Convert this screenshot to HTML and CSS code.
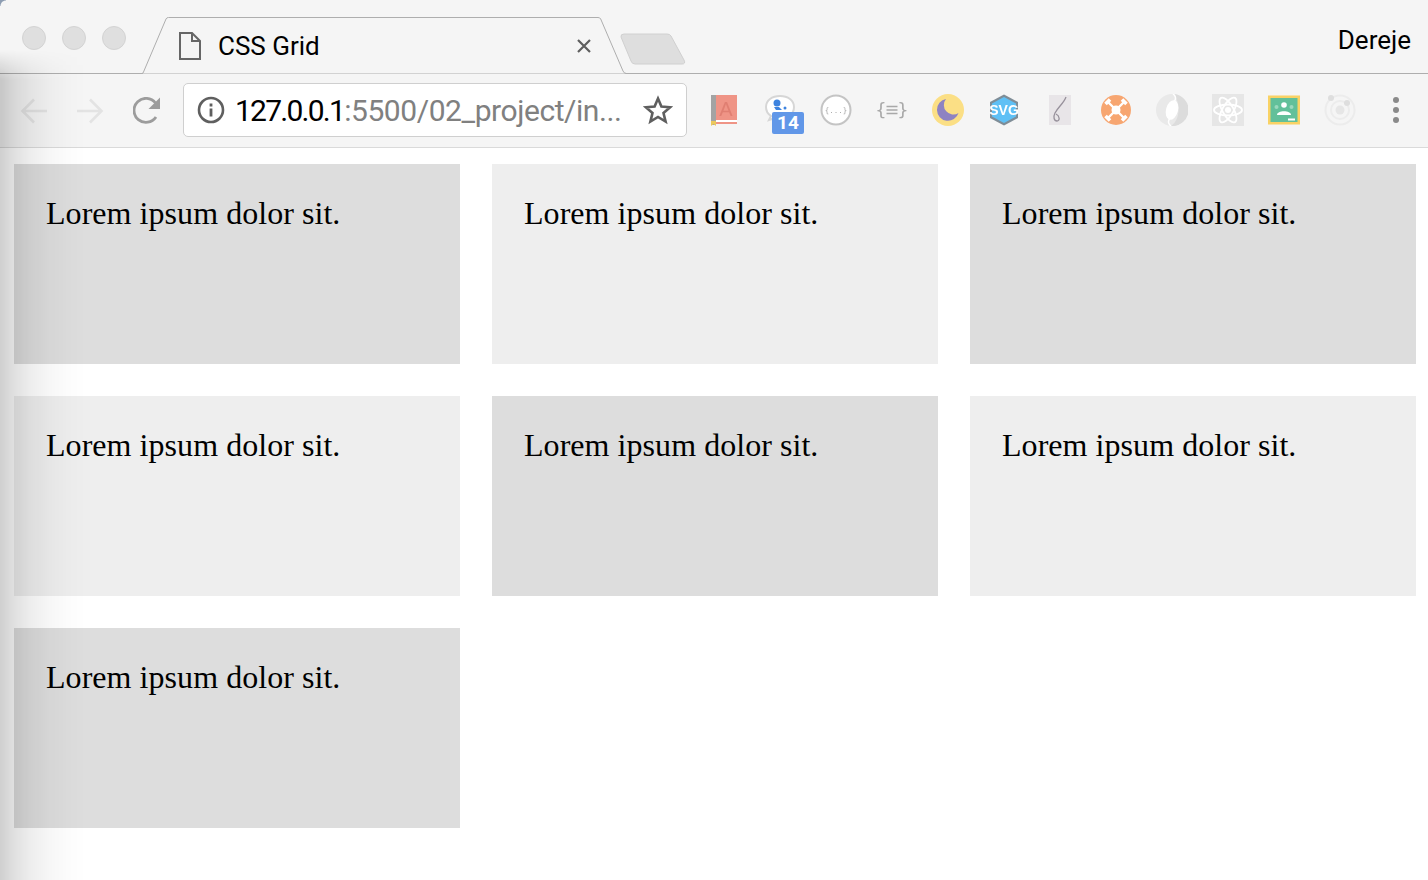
FILE: index.html
```html
<!DOCTYPE html>
<html lang="en">
<head>
    <meta charset="UTF-8">
    <meta name="viewport" content="width=device-width, initial-scale=1.0">
    <title>CSS Grid</title>
    <link rel="stylesheet" href="styles.css">
</head>
<body>
    <div class="corner"></div>
    <div class="edge-shadow"></div>

    <header class="chrome">
        <div class="tabstrip">
            <div class="lights">
                <span class="light"></span>
                <span class="light"></span>
                <span class="light"></span>
            </div>
            <div class="tab">
                <svg class="tab-shape" width="488" height="58" viewBox="0 0 488 58">
                    <path d="M0.5 56.5H1Q2 56.5 2.500 55L25 2Q25.600 0.500 27.500 0.500H457Q459 0.500 459.700 2L482 54Q483 56.500 485.500 56.500H488" fill="#f5f5f5" stroke="#aeaeae" stroke-width="1"/>
                </svg>
                <svg class="tab-file" width="22" height="28" viewBox="0 0 22 28">
                    <path d="M1 1H13L21 9V27H1Z M13 1V9H21" fill="none" stroke="#666" stroke-width="2"/>
                </svg>
                <span class="tab-title">CSS Grid</span>
                <svg class="tab-close" width="16" height="16" viewBox="0 0 16 16">
                    <path d="M2 2L14 14M14 2L2 14" fill="none" stroke="#5f5f5f" stroke-width="2.200"/>
                </svg>
            </div>
            <svg class="new-tab" width="66" height="32" viewBox="0 0 66 32">
                <path d="M4 1H47Q50 1 51 3L64 27Q66 31 62 31H15Q12 31 11 28L1 4Q0.500 1 4 1Z" fill="#dedede" stroke="#d0d0d0"/>
            </svg>
            <span class="user">Dereje</span>
        </div>

        <div class="toolbar">
            <svg class="nav-icon" width="28" height="28" viewBox="0 0 28 28">
                <path d="M27 14H3M14 2.500L2.500 14L14 25.500" fill="none" stroke="#e3e3e3" stroke-width="2.600"/>
            </svg>
            <svg class="nav-icon" width="28" height="28" viewBox="0 0 28 28">
                <path d="M1 14H25M14 2.500L25.500 14L14 25.500" fill="none" stroke="#e3e3e3" stroke-width="2.600"/>
            </svg>
            <svg class="nav-icon" width="28" height="28" viewBox="0 0 28 28">
                <path d="M23 20A12 12 0 1 1 22.500 6" fill="none" stroke="#9c9c9c" stroke-width="2.800"/>
                <path d="M27 0.500V12H15.500Z" fill="#9c9c9c"/>
            </svg>

            <div class="omnibox">
                <svg width="28" height="28" viewBox="0 0 28 28">
                    <circle cx="14" cy="14" r="12" fill="none" stroke="#5f5f5f" stroke-width="2.600"/>
                    <rect x="12.600" y="12.500" width="2.800" height="8" fill="#5f5f5f"/>
                    <rect x="12.600" y="7.500" width="2.800" height="3" fill="#5f5f5f"/>
                </svg>
                <span class="url"><span class="url-host">127.0.0.1</span>:5500/02_project/in...</span>
                <svg class="star" width="30" height="30" viewBox="0 0 30 30">
                    <path d="M15 3.500L18.400 11.600L27.200 12.300L20.500 18L22.600 26.600L15 22L7.400 26.600L9.500 18L2.800 12.300L11.600 11.600Z" fill="none" stroke="#5f5f5f" stroke-width="2.600"/>
                </svg>
            </div>

            <div class="extensions">
                <svg class="ext" viewBox="0 0 32 32">
                    <rect x="3" y="1" width="26" height="27" fill="#ef9486"/>
                    <rect x="3" y="1" width="5" height="30" fill="#a3a3a3"/>
                    <rect x="8" y="26" width="21" height="2" fill="#fff"/>
                    <rect x="8" y="28" width="21" height="2" fill="#ef9486"/>
                    <path d="M3 27H8V32L5.500 30L3 32Z" fill="#ecc95c"/>
                    <text x="18" y="22" class="ext-book">A</text>
                </svg>
                <div class="ext ext-badged">
                    <svg viewBox="0 0 32 32">
                        <path d="M16 2C8 2 2 6.500 2 13C2 17 4 20 7 22L5 26L11 24C13 24.500 14 25 16 25C24 25 30 20 30 13C30 6.500 24 2 16 2Z" fill="#fff" stroke="#d6d6d6" stroke-width="2"/>
                        <circle cx="13" cy="9" r="3.500" fill="#3d83df"/>
                        <path d="M10 13H15L18 16H12Z" fill="#3d83df"/>
                        <circle cx="21" cy="14" r="1.500" fill="#3d83df"/>
                    </svg>
                    <span class="badge">14</span>
                </div>
                <svg class="ext" viewBox="0 0 32 32">
                    <circle cx="16" cy="16" r="14.500" fill="#fff" stroke="#c4c4c4" stroke-width="2"/>
                    <text x="16" y="19" class="ext-braces">{...}</text>
                </svg>
                <svg class="ext" viewBox="0 0 32 32">
                    <text x="5" y="22" class="ext-curly">{</text>
                    <text x="27" y="22" class="ext-curly">}</text>
                    <path d="M10.500 12.500H21.500M10.500 16H21.500M10.500 19.500H21.500" fill="none" stroke="#a9a9a9" stroke-width="1.500"/>
                </svg>
                <svg class="ext" viewBox="0 0 32 32">
                    <circle cx="16" cy="16" r="16" fill="#fbdf85"/>
                    <path d="M14 5A11 11 0 1 0 26.500 19A9.500 9.500 0 0 1 14 5Z" fill="#8e83c2"/>
                </svg>
                <svg class="ext" viewBox="0 0 32 32">
                    <path d="M16 0.500L30 8V24L16 31.500L2 24V8Z" fill="#7f8d97"/>
                    <path d="M16 3L28 9.500V22.500L16 29L4 22.500V9.500Z" fill="#5fc0f5"/>
                    <text x="16" y="21" class="ext-svg">SVG</text>
                </svg>
                <svg class="ext" viewBox="0 0 32 32">
                    <rect x="5" y="1" width="22" height="30" fill="#e8e5e8"/>
                    <path d="M22 3C20 9 14 13 11 19C9 23 10 27 13 27C16 27 16 22 12 20" fill="none" stroke="#97919b" stroke-width="1.300"/>
                </svg>
                <svg class="ext" viewBox="0 0 32 32">
                    <circle cx="16" cy="16" r="15" fill="#f7a671"/>
                    <path d="M8 8L24 24M24 8L8 24" stroke="#fff" stroke-width="2.400"/>
                    <circle cx="16" cy="16" r="4.500" fill="#fff"/>
                    <path d="M5.500 10L10 5.500M22 5.500L26.500 10M5.500 22L10 26.500M22 26.500L26.500 22" stroke="#fff" stroke-width="3.600"/>
                </svg>
                <svg class="ext" viewBox="0 0 32 32">
                    <circle cx="16" cy="16" r="16" fill="#e9e9e9"/>
                    <path d="M18 0A16 16 0 0 1 15 32C24 26 25 10 18 0Z" fill="#dcdcdc"/>
                    <ellipse cx="16" cy="16" rx="6" ry="10" transform="rotate(15 16 16)" fill="#fff"/>
                    <path d="M17 0C20 2 20 5 18.500 7M15 32C12 30 12 27 13.500 25" fill="none" stroke="#fff" stroke-width="1.500"/>
                </svg>
                <svg class="ext" viewBox="0 0 32 32">
                    <rect width="32" height="32" fill="#e6e6e6"/>
                    <g fill="none" stroke="#fff" stroke-width="1.800">
                        <ellipse cx="16" cy="16" rx="14" ry="5.500"/>
                        <ellipse cx="16" cy="16" rx="14" ry="5.500" transform="rotate(60 16 16)"/>
                        <ellipse cx="16" cy="16" rx="14" ry="5.500" transform="rotate(120 16 16)"/>
                    </g>
                    <circle cx="16" cy="16" r="3" fill="#fff"/>
                </svg>
                <svg class="ext" viewBox="0 0 32 32">
                    <rect width="32" height="29" y="1.500" fill="#f9d265"/>
                    <rect x="2.500" y="4" width="27" height="24" fill="#62c09a"/>
                    <circle cx="16" cy="11" r="2.800" fill="#fff"/>
                    <circle cx="8.500" cy="13" r="2" fill="#9bd8bd"/>
                    <circle cx="23.500" cy="13" r="2" fill="#9bd8bd"/>
                    <path d="M9 21C9 16 23 16 23 21Z" fill="#fff"/>
                    <rect x="20" y="24.500" width="7" height="2" fill="#fff"/>
                </svg>
                <svg class="ext" viewBox="0 0 32 32">
                    <circle cx="16" cy="16" r="14.500" fill="none" stroke="#ececec" stroke-width="2"/>
                    <circle cx="16" cy="16" r="9" fill="none" stroke="#ececec" stroke-width="2"/>
                    <circle cx="16" cy="16" r="4.500" fill="#e6e6e6"/>
                    <circle cx="7" cy="4" r="3" fill="#dedede"/>
                    <circle cx="23" cy="9" r="3" fill="#dedede"/>
                </svg>
            </div>

            <div class="menu-dots">
                <span></span>
                <span></span>
                <span></span>
            </div>
        </div>
    </header>

    <main class="grid">
        <div class="item dark">Lorem ipsum dolor sit.</div>
        <div class="item">Lorem ipsum dolor sit.</div>
        <div class="item dark">Lorem ipsum dolor sit.</div>
        <div class="item">Lorem ipsum dolor sit.</div>
        <div class="item dark">Lorem ipsum dolor sit.</div>
        <div class="item">Lorem ipsum dolor sit.</div>
        <div class="item dark">Lorem ipsum dolor sit.</div>
    </main>
</body>
</html>
```

FILE: styles.css
```css
body {
    margin: 0;
    height: 880px;
    overflow: hidden;
    background-color: #fff;
    font-family: "Liberation Serif", serif;
}

.corner {
    position: absolute;
    top: 0;
    left: 0;
    width: 6px;
    height: 6px;
    background: radial-gradient(circle at 100% 100%, transparent 5px, #8d9db2 6px);
}

.edge-shadow {
    position: absolute;
    top: 50px;
    left: 0;
    bottom: 0;
    width: 88px;
    z-index: 2;
    background: linear-gradient(90deg, rgba(0, 0, 0, 0.19) 0, rgba(0, 0, 0, 0.12) 14px, rgba(0, 0, 0, 0.07) 30px, rgba(0, 0, 0, 0.03) 50px, rgba(0, 0, 0, 0.01) 68px, rgba(0, 0, 0, 0) 86px);
    -webkit-mask-image: linear-gradient(180deg, transparent 0, #000 30px);
    mask-image: linear-gradient(180deg, transparent 0, #000 30px);
}

.chrome {
    background-color: #f5f5f5;
    font-family: Roboto, sans-serif;
}

.tabstrip {
    display: flex;
    height: 73px;
    border-bottom: 1px solid #aeaeae;
}

.lights {
    display: flex;
    gap: 16px;
    padding: 26px 0 0 22px;
}

.light {
    width: 24px;
    height: 24px;
    box-sizing: border-box;
    border-radius: 50%;
    background-color: #dfdfdf;
    border: 1px solid #d3d3d3;
}

.tab {
    position: relative;
    display: flex;
    align-items: center;
    width: 488px;
    height: 57px;
    margin: 17px 0 0 16px;
    box-sizing: border-box;
    padding: 0 38px 0 37px;
}

.tab-shape {
    position: absolute;
    top: 0;
    left: -1px;
}

.tab-file,
.tab-title,
.tab-close {
    position: relative;
}

.tab-title {
    flex: 1;
    margin-left: 17px;
    font-size: 26px;
    color: #000;
}

.new-tab {
    margin: 33px 0 0 -10px;
}

.user {
    margin-left: auto;
    padding: 25px 17px 0 0;
    font-size: 26px;
    line-height: 30px;
    color: #000;
}

.toolbar {
    display: flex;
    align-items: center;
    height: 74px;
    box-sizing: border-box;
    padding: 0 0 0 20px;
    border-bottom: 1px solid #dadada;
}

.toolbar > .nav-icon {
    margin-right: 28px;
}

.toolbar > .nav-icon:nth-child(2) {
    margin-right: 29px;
}

.toolbar > .nav-icon:nth-child(3) {
    margin-right: 22px;
}

.omnibox {
    display: flex;
    align-items: center;
    width: 504px;
    height: 54px;
    box-sizing: border-box;
    margin-top: -1px;
    padding: 0 13px;
    background-color: #fff;
    border: 1px solid #cfcfcf;
    border-radius: 5px;
}

.url {
    flex: 1;
    margin-left: 10px;
    padding-top: 1px;
    font-size: 30px;
    letter-spacing: -0.43px;
    color: #808080;
    white-space: nowrap;
}

.url-host {
    color: #000;
    letter-spacing: -1.75px;
}

.extensions {
    display: flex;
    gap: 24px;
    margin-left: 21px;
    margin-top: -1px;
}

.ext {
    display: block;
    width: 32px;
    height: 32px;
    filter: blur(0.4px);
}

.ext-badged {
    position: relative;
    filter: none;
}

.ext-badged svg {
    display: block;
    filter: blur(0.4px);
}

.badge {
    position: absolute;
    left: 8px;
    top: 18px;
    width: 32px;
    height: 22px;
    border-radius: 2px;
    background-color: #6197e8;
    color: #fff;
    font-size: 19px;
    font-weight: 700;
    line-height: 22px;
    text-align: center;
}

.ext-book {
    font-family: "Liberation Sans", sans-serif;
    font-size: 20px;
    fill: #e07f72;
    text-anchor: middle;
}

.ext-braces {
    font-family: "DejaVu Sans Mono", monospace;
    font-size: 7.500px;
    fill: #a8a8a8;
    text-anchor: middle;
}

.ext-curly {
    font-family: "DejaVu Sans Mono", monospace;
    font-size: 18px;
    fill: #a9a9a9;
    text-anchor: middle;
}

.ext-svg {
    font-family: "Liberation Sans", sans-serif;
    font-size: 14px;
    font-weight: 700;
    fill: #fff;
    text-anchor: middle;
}

.menu-dots {
    display: flex;
    flex-direction: column;
    gap: 4px;
    margin-left: 37px;
    margin-top: -1px;
}

.menu-dots span {
    width: 6px;
    height: 6px;
    border-radius: 50%;
    background-color: #8a8a8a;
}

.grid {
    display: grid;
    grid-template-columns: repeat(3, 446px);
    grid-auto-rows: 200px;
    gap: 32px;
    padding: 16px 0 0 14px;
}

.item {
    padding: 31px 32px;
    box-sizing: border-box;
    background-color: #eee;
    font-size: 32px;
    letter-spacing: 0.05px;
    line-height: 36px;
    color: #000;
}

.item.dark {
    background-color: #ddd;
}
```
